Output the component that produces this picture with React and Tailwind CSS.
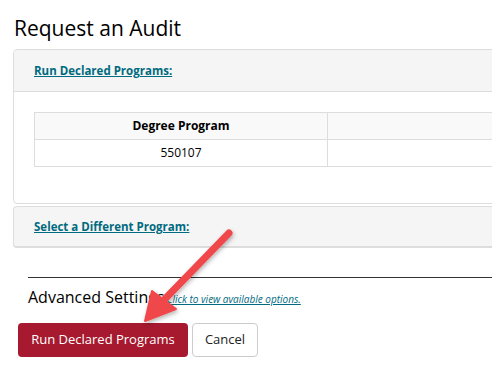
import React from "react";

function Arrow() {
  return (
    <svg
      className="absolute left-0 top-0 pointer-events-none"
      width="492"
      height="392"
      viewBox="0 0 492 392"
    >
      <defs>
        <filter id="sh" x="-20%" y="-20%" width="140%" height="140%">
          <feDropShadow dx="1" dy="2" stdDeviation="2" floodColor="#000" floodOpacity="0.3" />
        </filter>
      </defs>
      <g filter="url(#sh)">
        <line x1="229" y1="233" x2="162" y2="302" stroke="#f0474b" strokeWidth="7" strokeLinecap="round" />
        <polygon points="145,321 152,291 176,309" fill="#f0474b" stroke="#f0474b" strokeWidth="2" strokeLinejoin="round" />
      </g>
    </svg>
  );
}

export default function App() {
  return (
    <div
      className="relative w-[492px] h-[392px] overflow-hidden bg-white text-[#222]"
      style={{ fontFamily: '"Open Sans", "Noto Sans", sans-serif' }}
    >
      <div className="w-[640px] pl-[13px] pt-[14px]">
        <h1 className="pl-px text-[21px] leading-[28px] font-medium text-black mb-[7px]">Request an Audit</h1>

        <div className="border border-[#dddddd] rounded-[4px]">
          <div className="h-[42px] bg-[#f5f5f5] border-b border-[#dddddd] rounded-t-[4px] flex items-center pl-[20px]">
            <a href="#" className="text-[11.5px] font-bold text-[#006a80] underline">Run Declared Programs:</a>
          </div>
          <div className="pt-[20px] pb-[36px] pl-[20px]">
            <table className="border-collapse text-[12px]">
              <thead>
                <tr className="bg-[#f9f9f9]">
                  <th className="w-[293px] h-[27px] border border-[#dddddd] font-bold text-black">Degree Program</th>
                  <th className="w-[300px] border border-[#dddddd]"></th>
                </tr>
              </thead>
              <tbody>
                <tr>
                  <td className="h-[27px] border border-[#dddddd] text-center text-black">550107</td>
                  <td className="border border-[#dddddd]"></td>
                </tr>
              </tbody>
            </table>
          </div>
        </div>

        <div className="mt-[2px] h-[42px] bg-[#f5f5f5] border border-[#dddddd] border-b-2 rounded-[4px] flex items-center pl-[20px]">
          <a href="#" className="text-[11.5px] font-bold text-[#006a80] underline">Select a Different Program:</a>
        </div>

        <div className="ml-[15px] mt-[29px] border-t border-[#333]"></div>

        <div className="ml-[15px] mt-[7px] flex items-baseline">
          <span className="text-[16px] font-medium text-black">Advanced Settings</span>
          <a href="#" className="ml-[2px] text-[10px] italic text-[#006a80] underline">Click to view available options.</a>
        </div>

        <div className="ml-[5px] mt-[14px] flex gap-[4px]">
          <button className="h-[34px] w-[170px] rounded-[4px] bg-[#a6192e] text-white text-[13px]">Run Declared Programs</button>
          <button className="h-[34px] w-[66px] rounded-[4px] bg-white border border-[#cccccc] text-[13px] text-[#222]">Cancel</button>
        </div>
      </div>
      <Arrow />
    </div>
  );
}
